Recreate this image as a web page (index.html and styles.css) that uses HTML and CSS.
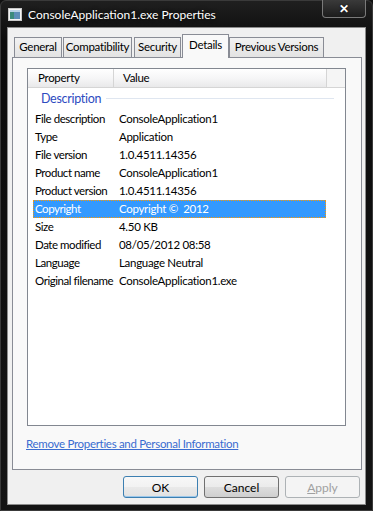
FILE: index.html
```html
<!DOCTYPE html>
<html lang="en">
  <head>
    <meta charset="UTF-8" />
    <title>ConsoleApplication1.exe Properties</title>
    <link rel="stylesheet" href="styles.css">
  </head>
  <body>
    <div class="window">
      <div class="titlebar">
        <svg class="app-icon" width="14" height="13" viewBox="0 0 14 13">
          <rect x="0.5" y="0.5" width="13" height="12" fill="#f4f4f4" stroke="#c8c8c8" />
          <rect x="2" y="2" width="4" height="9" fill="#3c8c7c" />
          <rect x="6" y="2" width="6" height="9" fill="#5d8fb8" />
          <rect x="2" y="2" width="10" height="2" fill="#b9d3e6" />
        </svg>
        <span class="title">ConsoleApplication1.exe Properties</span>
        <button class="close-btn">&#x2715;</button>
      </div>

      <div class="client">
        <div class="tabs">
          <div class="tab t-general">General</div>
          <div class="tab t-compat">Compatibility</div>
          <div class="tab t-security">Security</div>
          <div class="tab t-details active">Details</div>
          <div class="tab t-previous">Previous Versions</div>
        </div>

        <div class="panel">
          <div class="listview">
            <div class="lv-header">
              <div class="lv-col first">Property</div>
              <div class="lv-col second">Value</div>
              <div class="lv-col filler"></div>
            </div>
            <div class="group">
              <span class="group-name">Description</span>
              <span class="group-line"></span>
            </div>
            <div class="row"><span>File description</span><span>ConsoleApplication1</span></div>
            <div class="row"><span>Type</span><span>Application</span></div>
            <div class="row"><span>File version</span><span>1.0.4511.14356</span></div>
            <div class="row"><span>Product name</span><span>ConsoleApplication1</span></div>
            <div class="row"><span>Product version</span><span>1.0.4511.14356</span></div>
            <div class="row selected"><span>Copyright</span><span>Copyright &copy;&nbsp; 2012</span></div>
            <div class="row"><span>Size</span><span>4.50 KB</span></div>
            <div class="row"><span>Date modified</span><span>08/05/2012 08:58</span></div>
            <div class="row"><span>Language</span><span>Language Neutral</span></div>
            <div class="row"><span>Original filename</span><span>ConsoleApplication1.exe</span></div>
          </div>
          <a class="remove-link" href="#">Remove Properties and Personal Information</a>
        </div>

        <div class="buttons">
          <button class="btn default">OK</button>
          <button class="btn">Cancel</button>
          <button class="btn disabled"><u>A</u>pply</button>
        </div>
      </div>
    </div>
  </body>
</html>
```

FILE: styles.css
```css
* {
  box-sizing: border-box;
  margin: 0;
  padding: 0;
}
body {
  background: #111;
  font-family: "Lato", "Liberation Sans", sans-serif;
  font-size: 11.5px;
  letter-spacing: -0.3px;
  color: #000;
  overflow: hidden;
}
.window {
  width: 373px;
  height: 511px;
  background: linear-gradient(180deg, #1f1f1f 0%, #0c0c0c 40px, #141414 100%);
  border: 1px solid #3a3a3a;
  border-radius: 6px 6px 0 0;
  padding: 0 6px 5px 6px;
  display: flex;
  flex-direction: column;
}
.titlebar {
  height: 26px;
  display: flex;
  align-items: center;
  position: relative;
}
.app-icon {
  margin-left: 1px;
  margin-top: 1px;
}
.title {
  margin-left: 6px;
  color: #fff;
  font-size: 12px;
  letter-spacing: 0;
  text-shadow: 0 0 4px rgba(0, 0, 0, 0.9);
}
.close-btn {
  position: absolute;
  top: -1px;
  right: 0;
  width: 44px;
  height: 18px;
  background: linear-gradient(180deg, #3a3a3a, #1c1c1c);
  border: 1px solid #7a7a7a;
  border-top: none;
  border-radius: 0 0 4px 4px;
  color: #fff;
  font-size: 12px;
  font-weight: bold;
  line-height: 16px;
  text-shadow: 0 0 2px #000;
}
.client {
  flex: 1;
  background: #f0f0f0;
  border: 1px solid #8c8c8c;
  padding: 6px 3px 0 4px;
  display: flex;
  flex-direction: column;
}
.tabs {
  display: flex;
  align-items: flex-end;
  height: 23px;
  padding-left: 2px;
  position: relative;
  z-index: 1;
}
.tab {
  height: 20px;
  border: 1px solid #898c95;
  border-bottom: none;
  background: linear-gradient(180deg, #f2f2f2, #e3e3e3);
  line-height: 18px;
  text-align: center;
  white-space: nowrap;
}
.t-general {
  width: 48px;
}
.t-compat {
  width: 69px;
  margin-left: 1px;
}
.t-security {
  width: 47px;
  margin-left: 2px;
}
.t-details {
  width: 47px;
  margin-left: 1px;
}
.t-previous {
  width: 95px;
}
.tab.active {
  height: 24px;
  margin-bottom: -1px;
  background: #f9f9f9;
  line-height: 20px;
}
.panel {
  width: 350px;
  height: 413px;
  background: #f9f9f9;
  border: 1px solid #898c95;
  padding: 10px 0 0 14px;
}
.listview {
  width: 319px;
  height: 358px;
  background: #fff;
  border: 1px solid #828790;
}
.lv-header {
  display: flex;
  height: 19px;
  background: linear-gradient(180deg, #ffffff 0%, #f6f6f7 50%, #e9e9ea 100%);
  border-bottom: 1px solid #d5d5d5;
}
.lv-col {
  line-height: 18px;
  border-right: 1px solid #d5d5d5;
}
.lv-col.first {
  width: 86px;
  padding-left: 10px;
}
.lv-col.second {
  width: 213px;
  padding-left: 9px;
}
.lv-col.filler {
  flex: 1;
  border-right: none;
  background: #f5f5f5;
}
.group {
  display: flex;
  align-items: center;
  height: 21px;
  padding-left: 13px;
  margin-bottom: 1px;
}
.group-name {
  color: #2d4bbf;
  font-size: 12.5px;
}
.group-line {
  flex: 1;
  height: 1px;
  background: #dfe6f0;
  margin: 0 11px 0 5px;
}
.row {
  display: grid;
  grid-template-columns: 86px 1fr;
  width: 293px;
  height: 18px;
  margin-left: 5px;
  line-height: 18px;
  white-space: nowrap;
}
.row span:first-child {
  padding-left: 2px;
  letter-spacing: -0.45px;
}
.row.selected {
  background: #3399ff;
  color: #fff;
  outline: 1px dotted #ff9900;
  outline-offset: -1px;
}
.remove-link {
  display: inline-block;
  margin-top: 11px;
  margin-left: -1px;
  color: #3a6cd0;
  text-decoration: underline;
}
.buttons {
  display: flex;
  justify-content: flex-end;
  gap: 6px;
  padding: 6px 2px 0 0;
}
.btn {
  width: 75px;
  height: 22px;
  font-family: inherit;
  font-size: 12px;
  border: 1px solid #707070;
  border-radius: 3px;
  background: linear-gradient(180deg, #f2f2f2 0%, #ebebeb 50%, #dddddd 51%, #cfcfcf 100%);
  color: #000;
}
.btn.default {
  border-color: #3c7fb1;
  background: linear-gradient(180deg, #f8f8f8 0%, #f2f2f2 50%, #e9e9e9 51%, #e2e2e2 100%);
  box-shadow: inset 0 -1px 0 #9bc7ea;
}
.btn.disabled {
  border-color: #adb2b5;
  background: #f4f4f4;
  color: #a0a0a0;
}
```
